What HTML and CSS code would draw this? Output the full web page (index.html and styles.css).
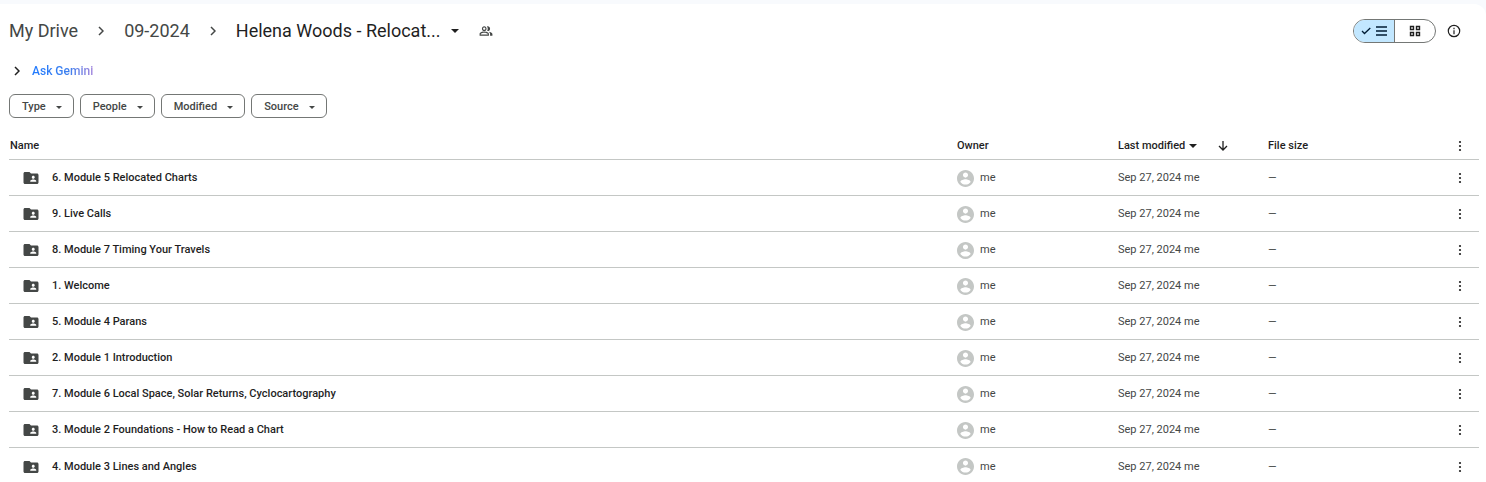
FILE: index.html
```
<!DOCTYPE html>
<html lang="en">

<head>
    <meta charset="UTF-8" />
    <meta name="viewport" content="width=device-width, initial-scale=1.0" />
    <title>My Drive</title>
    <link rel="stylesheet" href="styles.css">
</head>

<body>
    <!-- shared icons -->
    <svg class="sprite" aria-hidden="true">
        <symbol id="i-folder" viewBox="0 0 24 24"><path d="M20 6h-8l-2-2H4c-1.1 0-2 .9-2 2v12c0 1.1.9 2 2 2h16c1.1 0 2-.9 2-2V8c0-1.1-.9-2-2-2zm-5 3c1.1 0 2 .9 2 2s-.9 2-2 2-2-.9-2-2 .9-2 2-2zm4 8h-8v-1c0-1.33 2.67-2 4-2s4 .67 4 2v1z"/></symbol>
        <symbol id="i-user" viewBox="2 2 20 20"><path d="M12 2C6.48 2 2 6.48 2 12s4.48 10 10 10 10-4.48 10-10S17.52 2 12 2zm0 3c1.66 0 3 1.34 3 3s-1.34 3-3 3-3-1.34-3-3 1.34-3 3-3zm0 14.2c-2.5 0-4.71-1.28-6-3.22.03-1.99 4-3.08 6-3.08 1.99 0 5.97 1.09 6 3.08-1.29 1.94-3.5 3.22-6 3.22z"/></symbol>
        <symbol id="i-more" viewBox="0 0 4 12"><circle cx="2" cy="2" r="1.1"/><circle cx="2" cy="6" r="1.1"/><circle cx="2" cy="10" r="1.1"/></symbol>
        <symbol id="i-chevron" viewBox="0 0 6 10"><path d="M1 1l4 4-4 4" fill="none" stroke="currentColor" stroke-width="1.5"/></symbol>
        <symbol id="i-caret" viewBox="0 0 8 4"><path d="M0 0h8L4 4z"/></symbol>
    </svg>

    <main class="panel">
        <header class="topbar">
            <nav class="crumbs" aria-label="Breadcrumb">
                <a href="#">My Drive</a>
                <svg class="chevron"><use href="#i-chevron"/></svg>
                <a href="#">09-2024</a>
                <svg class="chevron"><use href="#i-chevron"/></svg>
                <button class="current" type="button">Helena Woods - Relocat...
                    <svg class="caret"><use href="#i-caret"/></svg>
                </button>
                <button class="share" type="button" aria-label="Manage access">
                    <svg viewBox="0 0 24 24"><path d="M16.67 13.13C18.04 14.06 19 15.32 19 17v3h4v-3c0-2.18-3.57-3.47-6.33-3.87zM15 12c2.21 0 4-1.79 4-4s-1.79-4-4-4c-.47 0-.91.1-1.33.24C14.5 5.27 15 6.58 15 8s-.5 2.73-1.33 3.76c.42.14.86.24 1.33.24zM9 12c2.21 0 4-1.79 4-4s-1.79-4-4-4-4 1.79-4 4 1.79 4 4 4zm0-6c1.1 0 2 .9 2 2s-.9 2-2 2-2-.9-2-2 .9-2 2-2zm0 7c-2.67 0-8 1.34-8 4v3h16v-3c0-2.66-5.33-4-8-4zm6 5H3v-.99C3.2 16.29 6.3 15 9 15s5.8 1.29 6 2v1z"/></svg>
                </button>
            </nav>
            <div class="tools">
                <div class="views">
                    <button class="active" type="button" aria-label="List layout">
                        <svg width="10" height="8" viewBox="0 0 10 8"><path d="M1 4l2.500 2.500L9.300 1" fill="none" stroke="currentColor" stroke-width="1.3"/></svg>
                        <svg width="11" height="10" viewBox="0 0 11 10"><path d="M0 1h11M0 5h11M0 9h11" stroke="currentColor" stroke-width="1.4"/></svg>
                    </button>
                    <button type="button" aria-label="Grid layout">
                        <svg width="12" height="12" viewBox="0 0 12 12"><path d="M1.5 1.5h3v3h-3zM7.5 1.5h3v3h-3zM1.5 7.5h3v3h-3zM7.5 7.5h3v3h-3z" fill="none" stroke="currentColor" stroke-width="1.4"/></svg>
                    </button>
                </div>
                <button class="info" type="button" aria-label="View details">
                    <svg width="14" height="14" viewBox="0 0 14 14"><circle cx="7" cy="7" r="5.7" fill="none" stroke="currentColor" stroke-width="1.2"/><path d="M7 6.2v4M7 3.8v1.4" stroke="currentColor" stroke-width="1.2"/></svg>
                </button>
            </div>
        </header>

        <button class="gemini" type="button">
            <svg class="chevron"><use href="#i-chevron"/></svg>
            <span>Ask Gemini</span>
        </button>

        <div class="filters">
            <button type="button">Type <svg><use href="#i-caret"/></svg></button>
            <button type="button">People <svg><use href="#i-caret"/></svg></button>
            <button type="button">Modified <svg><use href="#i-caret"/></svg></button>
            <button type="button">Source <svg><use href="#i-caret"/></svg></button>
        </div>

        <table class="files">
            <thead>
                <tr>
                    <th class="name">Name</th>
                    <th class="owner">Owner</th>
                    <th class="modified">
                        <div class="sort">
                            <button type="button">Last modified <svg class="caret"><use href="#i-caret"/></svg></button>
                            <button type="button" aria-label="Reverse sort direction">
                                <svg width="10" height="10" viewBox="0 0 10 10"><path d="M5 0v9M1 5l4 4 4-4" fill="none" stroke="currentColor" stroke-width="1.3"/></svg>
                            </button>
                        </div>
                    </th>
                    <th class="size">File size</th>
                    <th class="action"><button type="button" aria-label="More options"><svg><use href="#i-more"/></svg></button></th>
                </tr>
            </thead>
            <tbody id="rows"></tbody>
        </table>
    </main>

    <script src="script.js"></script>
</body>

</html>
```
FILE: styles.css
```
* {
    box-sizing: border-box;
}

body {
    margin: 0;
    background-color: #f8fafd;
    color: #1f1f1f;
    font-family: Roboto, "Liberation Sans", sans-serif;
    font-size: 11px;
    line-height: 16px;
    overflow: hidden;
}

button {
    display: flex;
    align-items: center;
    padding: 0;
    border: 0;
    background: none;
    color: inherit;
    font: inherit;
    cursor: pointer;
}

svg {
    display: block;
    flex: none;
    fill: currentColor;
}

.sprite {
    position: absolute;
    width: 0;
    height: 0;
}

.panel {
    margin-top: 4px;
    padding: 15px 7px 0 9px;
    background-color: #fff;
    border-radius: 0 12px 0 0;
}

/* breadcrumb and view switch */

.topbar {
    display: flex;
    justify-content: space-between;
    align-items: center;
    height: 24px;
}

.crumbs {
    display: flex;
    align-items: center;
    gap: 20px;
    font-size: 18px;
    line-height: 24px;
    color: #444746;
}

.crumbs a {
    color: inherit;
    text-decoration: none;
}

.chevron {
    width: 6px;
    height: 10px;
}

.caret {
    width: 8px;
    height: 4px;
}

.current {
    gap: 10px;
    color: #1f1f1f;
}

.share svg {
    width: 14px;
    height: 14px;
}

.tools {
    display: flex;
    align-items: center;
    gap: 11px;
    padding-right: 18px;
}

.views {
    display: flex;
    border: 1px solid #747775;
    border-radius: 12px;
    overflow: hidden;
}

.views button {
    justify-content: center;
    gap: 5px;
    width: 40px;
    height: 22px;
}

.views .active {
    width: 41px;
    background-color: #c2e7ff;
    border-right: 1px solid #747775;
    color: #001d35;
}

/* ask gemini */

.gemini {
    gap: 12px;
    margin-top: 20px;
    padding-left: 5px;
    font-size: 12px;
    font-weight: 500;
}

.gemini span {
    background: linear-gradient(90deg, #217bfe, #3d7fee 60%, #a083dc);
    background-clip: text;
    -webkit-background-clip: text;
    color: transparent;
}

/* filter chips */

.filters {
    display: flex;
    gap: 6px;
    margin-top: 15px;
}

.filters button {
    gap: 10px;
    height: 24px;
    padding: 2px 11px 0 12px;
    border: 1px solid #747775;
    border-radius: 6px;
    color: #444746;
    font-weight: 500;
}

.filters svg {
    width: 6px;
    height: 3px;
}

/* file list */

.files {
    width: 100%;
    margin-top: 13px;
    border-collapse: separate;
    border-spacing: 0;
    table-layout: fixed;
}

.files th,
.files td {
    height: 36px;
    padding: 1px 0 0 1px;
    border-bottom: 1px solid #c4c7c5;
    text-align: left;
    color: #444746;
}

.files th {
    height: 29px;
    padding-top: 2px;
    color: #1f1f1f;
    font-weight: 500;
}

.files tr:last-child td {
    border-bottom: 0;
}

.files .owner {
    width: 161px;
}

.files .modified {
    width: 150px;
}

.files .size {
    width: 172px;
}

.files .action {
    width: 40px;
}

.sort {
    display: flex;
    gap: 21px;
}

.sort button {
    gap: 4px;
}

.cell {
    display: flex;
    align-items: center;
    gap: 6px;
}

.file {
    gap: 12px;
    padding-left: 12px;
    color: #1f1f1f;
    font-weight: 500;
}

.file svg {
    width: 18px;
    height: 18px;
    color: #444746;
}

.user svg {
    width: 17px;
    height: 17px;
    color: #c4c7c5;
}

.action button {
    margin: 0 auto;
    color: #1f1f1f;
}

.action svg {
    width: 4px;
    height: 12px;
}
```
FILE: script.js
```
const files = [
    "6. Module 5 Relocated Charts",
    "9. Live Calls",
    "8. Module 7 Timing Your Travels",
    "1. Welcome",
    "5. Module 4 Parans",
    "2. Module 1 Introduction",
    "7. Module 6 Local Space, Solar Returns, Cyclocartography",
    "3. Module 2 Foundations - How to Read a Chart",
    "4. Module 3 Lines and Angles"
];

let html = "";

for (let i = 0; i < files.length; i++) {
    html += `<tr>
        <td><div class="cell file"><svg><use href="#i-folder"/></svg>${files[i]}</div></td>
        <td><div class="cell user"><svg><use href="#i-user"/></svg>me</div></td>
        <td>Sep 27, 2024 me</td>
        <td>—</td>
        <td class="action"><button type="button" aria-label="More actions"><svg><use href="#i-more"/></svg></button></td>
    </tr>`;
}

document.getElementById("rows").innerHTML = html;
```
